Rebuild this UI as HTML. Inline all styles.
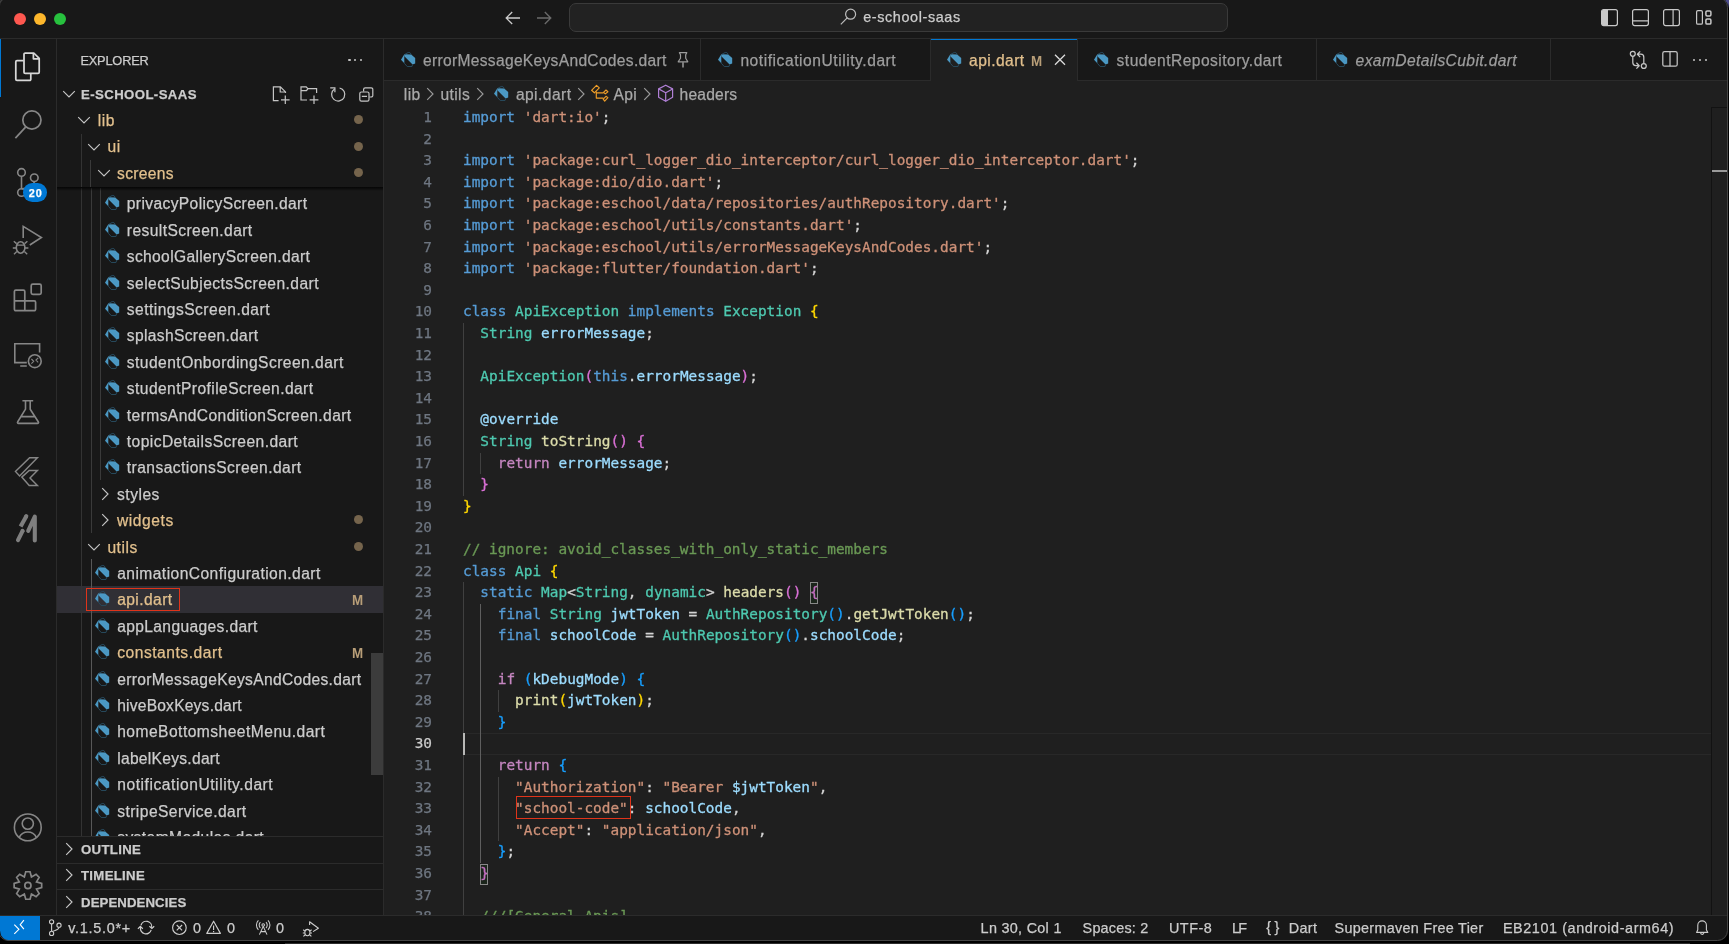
<!DOCTYPE html>
<html lang="en">
<head>
<meta charset="utf-8">
<title>api.dart — e-school-saas</title>
<style>
html,body{margin:0;padding:0;}
body{width:1729px;height:944px;overflow:hidden;background:#000;position:relative;font-family:'Liberation Sans',sans-serif;}
#wino{will-change:transform;position:absolute;left:0;top:-3px;width:1728px;height:944px;background:#181818;border-radius:10.5px;overflow:hidden;}
#win{position:absolute;left:0;top:3px;width:1728px;height:941px;}
#winb{position:absolute;left:-2px;top:-3px;width:1728px;height:942px;border:1px solid #444;border-radius:10.5px;pointer-events:none;z-index:50;}
.abs{position:absolute;}
.t{position:absolute;white-space:pre;-webkit-text-stroke:0.25px;}
.ln{position:absolute;left:384px;width:48px;text-align:right;font:14.4px/21.6px 'DejaVu Sans Mono','Liberation Mono',monospace;color:#6e7681;white-space:pre;-webkit-text-stroke:0.25px;}
.cl{position:absolute;left:463px;font:14.4px/21.6px 'DejaVu Sans Mono','Liberation Mono',monospace;color:#d4d4d4;white-space:pre;letter-spacing:0.009px;-webkit-text-stroke:0.3px;}
.k{color:#569cd6}.s{color:#ce9178}.c{color:#4ec9b0}.v{color:#9cdcfe}.f{color:#dcdcaa}.m{color:#6a9955}.r{color:#c586c0}
.b1{color:#ffd700}.b2{color:#da70d6}.b3{color:#179fff}
.hl{position:absolute;background:#2b2b2b;}
.vl{position:absolute;width:1px;background:#2b2b2b;}
.ig{position:absolute;width:1px;background:#404040;}
svg{position:absolute;overflow:visible;}
</style>
</head>
<body>
<div class="abs" style="left:1722px;top:0;width:7px;height:9px;background:linear-gradient(200deg,#4c4c8c 30%,#000 75%)"></div>
<div class="abs" style="left:285px;top:943px;width:1405px;height:1px;background:#2c2c2c"></div>
<div class="abs" style="left:0;top:0;width:6px;height:8px;background:#2b2b2b"></div>
<div id="wino"><div id="win">
<div class="abs" style="left:0px;top:0px;width:1728px;height:38px;background:#181818;"></div>
<div class="abs" style="left:0px;top:38px;width:1728px;height:1px;background:#2b2b2b;"></div>
<div class="abs" style="left:0px;top:39px;width:56px;height:876px;background:#181818;"></div>
<div class="abs" style="left:56px;top:39px;width:1px;height:876px;background:#2b2b2b;"></div>
<div class="abs" style="left:57px;top:39px;width:326px;height:876px;background:#181818;"></div>
<div class="abs" style="left:383px;top:39px;width:1px;height:876px;background:#2b2b2b;"></div>
<div class="abs" style="left:384px;top:39px;width:1344px;height:42px;background:#181818;"></div>
<div class="abs" style="left:384px;top:80px;width:1344px;height:1px;background:#2b2b2b;"></div>
<div class="abs" style="left:384px;top:81px;width:1344px;height:834px;background:#1f1f1f;"></div>
<div class="abs" style="left:0px;top:915px;width:1728px;height:1px;background:#2b2b2b;"></div>
<div class="abs" style="left:0px;top:916px;width:1728px;height:25px;background:#181818;"></div>
<div class="abs" style="left:13.8px;top:12.8px;width:12.4px;height:12.4px;border-radius:50%;background:#fe5850"></div>
<div class="abs" style="left:33.8px;top:12.8px;width:12.4px;height:12.4px;border-radius:50%;background:#fdb72c"></div>
<div class="abs" style="left:53.8px;top:12.8px;width:12.4px;height:12.4px;border-radius:50%;background:#27c13e"></div>
<svg style="left:504px;top:9px;" width="18" height="18" viewBox="0 0 18 18"><path d="M16 9H2.2M8.2 3L2.2 9l6 6" fill="none" stroke="#ccc" stroke-width="1.3"/></svg>
<svg style="left:535px;top:9px;" width="18" height="18" viewBox="0 0 18 18"><path d="M2 9h13.8M9.8 3l6 6-6 6" fill="none" stroke="#6b6b6b" stroke-width="1.3"/></svg>
<div class="abs" style="left:569px;top:3px;width:657px;height:27px;border:1px solid #3a3a3a;border-radius:7px;background:#222222"></div>
<svg style="left:840px;top:8px;" width="17" height="17" viewBox="0 0 17 17"><circle cx="10.6" cy="6.2" r="5" fill="none" stroke="#bdbdbd" stroke-width="1.2"/><path d="M7.2 9.8L0.8 16.4" stroke="#bdbdbd" stroke-width="1.2"/></svg>
<span class="t" style="left:863.2px;top:9.0px;font-size:14.4px;line-height:16px;color:#ccc;letter-spacing:0.617px;">e-school-saas</span>
<svg style="left:1601.1px;top:8.9px;" width="17" height="17.2" viewBox="0 0 17 17.2"><rect x="0.6" y="0.6" width="15.8" height="16" rx="2" fill="none" stroke="#c8c8c8" stroke-width="1.2"/><path d="M2.4 0.8H7V16.4H2.4A1.6 1.6 0 0 1 0.8 14.8V2.4A1.6 1.6 0 0 1 2.4 0.8z" fill="#c8c8c8"/></svg>
<svg style="left:1632px;top:8.9px;" width="17" height="17.2" viewBox="0 0 17 17.2"><rect x="0.6" y="0.6" width="15.8" height="16" rx="2" fill="none" stroke="#c8c8c8" stroke-width="1.2"/><path d="M0.6 11.9h15.8" stroke="#c8c8c8" stroke-width="1.2"/></svg>
<svg style="left:1663.2px;top:8.9px;" width="17" height="17.2" viewBox="0 0 17 17.2"><rect x="0.6" y="0.6" width="15.8" height="16" rx="2" fill="none" stroke="#c8c8c8" stroke-width="1.2"/><path d="M10.1 0.6v16" stroke="#c8c8c8" stroke-width="1.2"/></svg>
<svg style="left:1696px;top:10px;" width="16" height="15" viewBox="0 0 16 15"><rect x="0.6" y="0.6" width="5.8" height="13.6" rx="1.3" fill="none" stroke="#c8c8c8" stroke-width="1.2"/><rect x="9.9" y="0.9" width="5" height="5" rx="1.2" fill="none" stroke="#c8c8c8" stroke-width="1.5"/><rect x="9.9" y="9.1" width="5" height="5" rx="1.2" fill="none" stroke="#c8c8c8" stroke-width="1.5"/></svg>
<div class="abs" style="left:0px;top:39px;width:1.4px;height:58px;background:#0078d4;"></div>
<svg style="left:0;top:0" width="57" height="915" viewBox="0 0 57 915"><g fill="none" stroke="#d7d7d7" stroke-width="1.75" stroke-linejoin="round"><path d="M25.2 53h8.6l5.4 5.4v13.8a1.2 1.2 0 0 1-1.2 1.2H25.2a1.2 1.2 0 0 1-1.2-1.2V54.2a1.2 1.2 0 0 1 1.2-1.2z"/><path d="M33.4 53.2v5.6h5.6"/><path d="M23.6 60.6h-6.6a1.2 1.2 0 0 0-1.2 1.2v17.4a1.2 1.2 0 0 0 1.2 1.2h12.6a1.2 1.2 0 0 0 1.2-1.2v-5.4"/></g><g fill="none" stroke="#868686" stroke-width="1.7"><circle cx="31.9" cy="120" r="9.1"/><path d="M25.6 127.2L15.4 138.2"/></g><g fill="none" stroke="#868686" stroke-width="1.6"><circle cx="21.5" cy="172.4" r="3.8"/><circle cx="34.3" cy="177.8" r="3.8"/><circle cx="21.5" cy="192.5" r="3.8"/><path d="M21.5 176.2v12.5M34.3 181.6c0 5-6 6-12.8 7.4"/></g><g fill="none" stroke="#868686" stroke-width="1.6" stroke-linejoin="miter"><path d="M23.2 238V226.4L41.4 237.5 29.8 245"/><ellipse cx="20.6" cy="247.5" rx="4.3" ry="5.8"/><path d="M16.4 245.2H24.8" stroke-width="1.3"/><path d="M16.6 243.6l-2.8-2.4M24.6 243.6l2.8-2.4M16.2 248h-3.4M25 248h3.4M16.8 251.6l-2.8 2.6M24.4 251.6l2.8 2.6" stroke-width="1.4"/></g><g fill="none" stroke="#868686" stroke-width="1.7" stroke-linejoin="round"><path d="M15.8 290.1H23.4A1.4 1.4 0 0 1 24.8 291.5V300.9H34.2A1.4 1.4 0 0 1 35.6 302.3V309.3A1.4 1.4 0 0 1 34.2 310.7H15.8A1.4 1.4 0 0 1 14.4 309.3V291.5A1.4 1.4 0 0 1 15.8 290.1zM14.4 300.9H24.8V310.7"/><rect x="31.2" y="284.2" width="10" height="10.2" rx="1.6"/></g></svg>
<div class="abs" style="left:23.2px;top:183px;width:23.8px;height:18.6px;border-radius:9.3px;background:#0078d4;"></div>
<span class="t" style="left:28.8px;top:187.0px;font-size:10.8px;line-height:12px;color:#fff;letter-spacing:0.984px;font-weight:bold;">20</span>
<svg style="left:0;top:0" width="57" height="915" viewBox="0 0 57 915"><g fill="none" stroke="#868686" stroke-width="1.6"><path d="M39.6 352.6V343.8H14.8V362.6H26.8M20.2 366H26.8"/><circle cx="34.8" cy="361.2" r="6.4"/><path d="M31.4 359l2.3 2.3-2.3 2.3M38.2 357.8l-2.3 2.3 2.3 2.3" stroke-width="1.1"/></g><g fill="none" stroke="#868686" stroke-width="1.6" stroke-linejoin="round"><path d="M22.4 400.8H33.2M25.5 400.8V409.2L17.6 422a0.9 0.9 0 0 0 .8 1.4H37.6a0.9 0.9 0 0 0 .8-1.4L30.2 409.2V400.8M21.2 416.6H34.6"/></g><g fill="none" stroke="#868686" stroke-width="1.45" stroke-linejoin="miter"><path d="M15.4 471.4L29.6 457.7H37.4L19.6 476z"/><path d="M21.8 477.1L29.2 470.5H37.4L30 477.9L37.4 485.4H29.2z"/></g><g fill="none" stroke="#7e7e7e" stroke-width="4.1" stroke-linecap="round"><path d="M26.3 516.2L20.6 526.6" stroke-linecap="butt"/><path d="M26.1 516.4L26.3 516.1"/><path d="M22.6 530.8L18 540.2"/><path d="M22.9 530.2L22.4 531.2" stroke-linecap="butt"/><path d="M28.2 530.8L34.8 516.6V540.4" stroke-linejoin="round"/></g><g fill="none" stroke="#868686" stroke-width="1.6"><circle cx="27.8" cy="827.4" r="13.4"/><circle cx="27.8" cy="823.6" r="5.6"/><path d="M19.2 837.4a9.6 9.6 0 0 1 17.2 0"/></g></svg>
<svg style="left:0;top:0" width="57" height="915" viewBox="0 0 57 915"><g fill="none" stroke="#868686" stroke-width="1.7" stroke-linejoin="miter"><path d="M24.34 876.91 L25.75 871.75 L30.05 871.75 L31.46 876.91 L36.10 874.26 L39.14 877.30 L36.49 881.94 L41.65 883.35 L41.65 887.65 L36.49 889.06 L39.14 893.70 L36.10 896.74 L31.46 894.09 L30.05 899.25 L25.75 899.25 L24.34 894.09 L19.70 896.74 L16.66 893.70 L19.31 889.06 L14.15 887.65 L14.15 883.35 L19.31 881.94 L16.66 877.30 L19.70 874.26z"/><circle cx="27.9" cy="885.5" r="3.1"/></g></svg>
<span class="t" style="left:80.4px;top:53.0px;font-size:12.8px;line-height:15px;color:#cccccc;letter-spacing:-0.186px;">EXPLORER</span>
<div class="abs" style="left:348.4px;top:58.6px;width:2.2px;height:2.2px;border-radius:50%;background:#c5c5c5"></div>
<div class="abs" style="left:354.1px;top:58.6px;width:2.2px;height:2.2px;border-radius:50%;background:#c5c5c5"></div>
<div class="abs" style="left:359.8px;top:58.6px;width:2.2px;height:2.2px;border-radius:50%;background:#c5c5c5"></div>
<div class="abs" style="left:57px;top:586px;width:326px;height:26.6px;background:#302f35;"></div>
<div class="abs" style="left:57px;top:187px;width:326px;height:649.4px;overflow:hidden"><div class="abs" style="left:-57px;top:-187px;width:400px;height:900px">
<svg style="left:105.0px;top:195.4px;" width="14.2" height="15" viewBox="0 0 14.2 15"><polygon points="0,7.85 3.3,2.3 3.3,11.2" fill="#4b98c3"/><polygon points="3.3,2.3 10.2,2.6 14.2,5.9 14.2,11.4 11.6,12.6 3.3,4.3" fill="#4b98c3"/><polyline points="3.3,11.2 6.2,14.5 11.0,14.5 11.6,12.5" fill="none" stroke="#27495c" stroke-width="1"/><polyline points="4.0,2.2 7.2,0.5 8.9,0.6 10.4,2.6" fill="none" stroke="#27495c" stroke-width="1"/></svg>
<span class="t" style="left:126.8px;top:195.0px;font-size:15.6px;line-height:17px;color:#cccccc;letter-spacing:0.374px;">privacyPolicyScreen.dart</span>
<svg style="left:105.0px;top:221.8px;" width="14.2" height="15" viewBox="0 0 14.2 15"><polygon points="0,7.85 3.3,2.3 3.3,11.2" fill="#4b98c3"/><polygon points="3.3,2.3 10.2,2.6 14.2,5.9 14.2,11.4 11.6,12.6 3.3,4.3" fill="#4b98c3"/><polyline points="3.3,11.2 6.2,14.5 11.0,14.5 11.6,12.5" fill="none" stroke="#27495c" stroke-width="1"/><polyline points="4.0,2.2 7.2,0.5 8.9,0.6 10.4,2.6" fill="none" stroke="#27495c" stroke-width="1"/></svg>
<span class="t" style="left:126.8px;top:222.0px;font-size:15.6px;line-height:17px;color:#cccccc;letter-spacing:0.416px;">resultScreen.dart</span>
<svg style="left:105.0px;top:248.20000000000002px;" width="14.2" height="15" viewBox="0 0 14.2 15"><polygon points="0,7.85 3.3,2.3 3.3,11.2" fill="#4b98c3"/><polygon points="3.3,2.3 10.2,2.6 14.2,5.9 14.2,11.4 11.6,12.6 3.3,4.3" fill="#4b98c3"/><polyline points="3.3,11.2 6.2,14.5 11.0,14.5 11.6,12.5" fill="none" stroke="#27495c" stroke-width="1"/><polyline points="4.0,2.2 7.2,0.5 8.9,0.6 10.4,2.6" fill="none" stroke="#27495c" stroke-width="1"/></svg>
<span class="t" style="left:126.8px;top:248.0px;font-size:15.6px;line-height:17px;color:#cccccc;letter-spacing:0.344px;">schoolGalleryScreen.dart</span>
<svg style="left:105.0px;top:274.6px;" width="14.2" height="15" viewBox="0 0 14.2 15"><polygon points="0,7.85 3.3,2.3 3.3,11.2" fill="#4b98c3"/><polygon points="3.3,2.3 10.2,2.6 14.2,5.9 14.2,11.4 11.6,12.6 3.3,4.3" fill="#4b98c3"/><polyline points="3.3,11.2 6.2,14.5 11.0,14.5 11.6,12.5" fill="none" stroke="#27495c" stroke-width="1"/><polyline points="4.0,2.2 7.2,0.5 8.9,0.6 10.4,2.6" fill="none" stroke="#27495c" stroke-width="1"/></svg>
<span class="t" style="left:126.8px;top:275.0px;font-size:15.6px;line-height:17px;color:#cccccc;letter-spacing:0.439px;">selectSubjectsScreen.dart</span>
<svg style="left:105.0px;top:301.0px;" width="14.2" height="15" viewBox="0 0 14.2 15"><polygon points="0,7.85 3.3,2.3 3.3,11.2" fill="#4b98c3"/><polygon points="3.3,2.3 10.2,2.6 14.2,5.9 14.2,11.4 11.6,12.6 3.3,4.3" fill="#4b98c3"/><polyline points="3.3,11.2 6.2,14.5 11.0,14.5 11.6,12.5" fill="none" stroke="#27495c" stroke-width="1"/><polyline points="4.0,2.2 7.2,0.5 8.9,0.6 10.4,2.6" fill="none" stroke="#27495c" stroke-width="1"/></svg>
<span class="t" style="left:126.8px;top:301.0px;font-size:15.6px;line-height:17px;color:#cccccc;letter-spacing:0.463px;">settingsScreen.dart</span>
<svg style="left:105.0px;top:327.40000000000003px;" width="14.2" height="15" viewBox="0 0 14.2 15"><polygon points="0,7.85 3.3,2.3 3.3,11.2" fill="#4b98c3"/><polygon points="3.3,2.3 10.2,2.6 14.2,5.9 14.2,11.4 11.6,12.6 3.3,4.3" fill="#4b98c3"/><polyline points="3.3,11.2 6.2,14.5 11.0,14.5 11.6,12.5" fill="none" stroke="#27495c" stroke-width="1"/><polyline points="4.0,2.2 7.2,0.5 8.9,0.6 10.4,2.6" fill="none" stroke="#27495c" stroke-width="1"/></svg>
<span class="t" style="left:126.8px;top:327.0px;font-size:15.6px;line-height:17px;color:#cccccc;letter-spacing:0.345px;">splashScreen.dart</span>
<svg style="left:105.0px;top:353.8px;" width="14.2" height="15" viewBox="0 0 14.2 15"><polygon points="0,7.85 3.3,2.3 3.3,11.2" fill="#4b98c3"/><polygon points="3.3,2.3 10.2,2.6 14.2,5.9 14.2,11.4 11.6,12.6 3.3,4.3" fill="#4b98c3"/><polyline points="3.3,11.2 6.2,14.5 11.0,14.5 11.6,12.5" fill="none" stroke="#27495c" stroke-width="1"/><polyline points="4.0,2.2 7.2,0.5 8.9,0.6 10.4,2.6" fill="none" stroke="#27495c" stroke-width="1"/></svg>
<span class="t" style="left:126.8px;top:354.0px;font-size:15.6px;line-height:17px;color:#cccccc;letter-spacing:0.458px;">studentOnbordingScreen.dart</span>
<svg style="left:105.0px;top:380.20000000000005px;" width="14.2" height="15" viewBox="0 0 14.2 15"><polygon points="0,7.85 3.3,2.3 3.3,11.2" fill="#4b98c3"/><polygon points="3.3,2.3 10.2,2.6 14.2,5.9 14.2,11.4 11.6,12.6 3.3,4.3" fill="#4b98c3"/><polyline points="3.3,11.2 6.2,14.5 11.0,14.5 11.6,12.5" fill="none" stroke="#27495c" stroke-width="1"/><polyline points="4.0,2.2 7.2,0.5 8.9,0.6 10.4,2.6" fill="none" stroke="#27495c" stroke-width="1"/></svg>
<span class="t" style="left:126.8px;top:380.0px;font-size:15.6px;line-height:17px;color:#cccccc;letter-spacing:0.430px;">studentProfileScreen.dart</span>
<svg style="left:105.0px;top:406.6px;" width="14.2" height="15" viewBox="0 0 14.2 15"><polygon points="0,7.85 3.3,2.3 3.3,11.2" fill="#4b98c3"/><polygon points="3.3,2.3 10.2,2.6 14.2,5.9 14.2,11.4 11.6,12.6 3.3,4.3" fill="#4b98c3"/><polyline points="3.3,11.2 6.2,14.5 11.0,14.5 11.6,12.5" fill="none" stroke="#27495c" stroke-width="1"/><polyline points="4.0,2.2 7.2,0.5 8.9,0.6 10.4,2.6" fill="none" stroke="#27495c" stroke-width="1"/></svg>
<span class="t" style="left:126.8px;top:407.0px;font-size:15.6px;line-height:17px;color:#cccccc;letter-spacing:0.414px;">termsAndConditionScreen.dart</span>
<svg style="left:105.0px;top:433.0px;" width="14.2" height="15" viewBox="0 0 14.2 15"><polygon points="0,7.85 3.3,2.3 3.3,11.2" fill="#4b98c3"/><polygon points="3.3,2.3 10.2,2.6 14.2,5.9 14.2,11.4 11.6,12.6 3.3,4.3" fill="#4b98c3"/><polyline points="3.3,11.2 6.2,14.5 11.0,14.5 11.6,12.5" fill="none" stroke="#27495c" stroke-width="1"/><polyline points="4.0,2.2 7.2,0.5 8.9,0.6 10.4,2.6" fill="none" stroke="#27495c" stroke-width="1"/></svg>
<span class="t" style="left:126.8px;top:433.0px;font-size:15.6px;line-height:17px;color:#cccccc;letter-spacing:0.436px;">topicDetailsScreen.dart</span>
<svg style="left:105.0px;top:459.40000000000003px;" width="14.2" height="15" viewBox="0 0 14.2 15"><polygon points="0,7.85 3.3,2.3 3.3,11.2" fill="#4b98c3"/><polygon points="3.3,2.3 10.2,2.6 14.2,5.9 14.2,11.4 11.6,12.6 3.3,4.3" fill="#4b98c3"/><polyline points="3.3,11.2 6.2,14.5 11.0,14.5 11.6,12.5" fill="none" stroke="#27495c" stroke-width="1"/><polyline points="4.0,2.2 7.2,0.5 8.9,0.6 10.4,2.6" fill="none" stroke="#27495c" stroke-width="1"/></svg>
<span class="t" style="left:126.8px;top:459.0px;font-size:15.6px;line-height:17px;color:#cccccc;letter-spacing:0.441px;">transactionsScreen.dart</span>
<svg style="left:96.9px;top:485.7px;" width="16" height="16" viewBox="0 0 16 16"><polyline points="5.2,2.2 11,8 5.2,13.8" fill="none" stroke="#c5c5c5" stroke-width="1.15"/></svg>
<span class="t" style="left:117.0px;top:486.0px;font-size:15.6px;line-height:17px;color:#cccccc;letter-spacing:0.505px;">styles</span>
<svg style="left:96.9px;top:512.1px;" width="16" height="16" viewBox="0 0 16 16"><polyline points="5.2,2.2 11,8 5.2,13.8" fill="none" stroke="#c5c5c5" stroke-width="1.15"/></svg>
<span class="t" style="left:117.0px;top:512.0px;font-size:15.6px;line-height:17px;color:#e2c08d;letter-spacing:0.571px;">widgets</span>
<div class="abs" style="left:353.7px;top:515.3px;width:9.2px;height:9.2px;border-radius:50%;background:#75644c"></div>
<svg style="left:85.89999999999999px;top:538.7px;" width="16" height="16" viewBox="0 0 16 16"><polyline points="2.2,5.2 8,11 13.8,5.2" fill="none" stroke="#c5c5c5" stroke-width="1.15"/></svg>
<span class="t" style="left:107.4px;top:539.0px;font-size:15.6px;line-height:17px;color:#e2c08d;letter-spacing:0.541px;">utils</span>
<div class="abs" style="left:353.7px;top:541.7px;width:9.2px;height:9.2px;border-radius:50%;background:#75644c"></div>
<svg style="left:95.4px;top:565.0px;" width="14.2" height="15" viewBox="0 0 14.2 15"><polygon points="0,7.85 3.3,2.3 3.3,11.2" fill="#4b98c3"/><polygon points="3.3,2.3 10.2,2.6 14.2,5.9 14.2,11.4 11.6,12.6 3.3,4.3" fill="#4b98c3"/><polyline points="3.3,11.2 6.2,14.5 11.0,14.5 11.6,12.5" fill="none" stroke="#27495c" stroke-width="1"/><polyline points="4.0,2.2 7.2,0.5 8.9,0.6 10.4,2.6" fill="none" stroke="#27495c" stroke-width="1"/></svg>
<span class="t" style="left:117.2px;top:565.0px;font-size:15.6px;line-height:17px;color:#cccccc;letter-spacing:0.443px;">animationConfiguration.dart</span>
<svg style="left:95.4px;top:591.4px;" width="14.2" height="15" viewBox="0 0 14.2 15"><polygon points="0,7.85 3.3,2.3 3.3,11.2" fill="#4b98c3"/><polygon points="3.3,2.3 10.2,2.6 14.2,5.9 14.2,11.4 11.6,12.6 3.3,4.3" fill="#4b98c3"/><polyline points="3.3,11.2 6.2,14.5 11.0,14.5 11.6,12.5" fill="none" stroke="#27495c" stroke-width="1"/><polyline points="4.0,2.2 7.2,0.5 8.9,0.6 10.4,2.6" fill="none" stroke="#27495c" stroke-width="1"/></svg>
<span class="t" style="left:117.2px;top:591.0px;font-size:15.6px;line-height:17px;color:#e2c08d;letter-spacing:0.412px;">api.dart</span>
<span class="t" style="left:351.9px;top:592.0px;font-size:14.4px;line-height:16px;color:#b89e78;letter-spacing:0.000px;font-weight:bold;-webkit-text-stroke:0;transform:scaleX(0.93);transform-origin:0 0;">M</span>
<svg style="left:95.4px;top:617.8000000000001px;" width="14.2" height="15" viewBox="0 0 14.2 15"><polygon points="0,7.85 3.3,2.3 3.3,11.2" fill="#4b98c3"/><polygon points="3.3,2.3 10.2,2.6 14.2,5.9 14.2,11.4 11.6,12.6 3.3,4.3" fill="#4b98c3"/><polyline points="3.3,11.2 6.2,14.5 11.0,14.5 11.6,12.5" fill="none" stroke="#27495c" stroke-width="1"/><polyline points="4.0,2.2 7.2,0.5 8.9,0.6 10.4,2.6" fill="none" stroke="#27495c" stroke-width="1"/></svg>
<span class="t" style="left:117.2px;top:618.0px;font-size:15.6px;line-height:17px;color:#cccccc;letter-spacing:0.362px;">appLanguages.dart</span>
<svg style="left:95.4px;top:644.1999999999999px;" width="14.2" height="15" viewBox="0 0 14.2 15"><polygon points="0,7.85 3.3,2.3 3.3,11.2" fill="#4b98c3"/><polygon points="3.3,2.3 10.2,2.6 14.2,5.9 14.2,11.4 11.6,12.6 3.3,4.3" fill="#4b98c3"/><polyline points="3.3,11.2 6.2,14.5 11.0,14.5 11.6,12.5" fill="none" stroke="#27495c" stroke-width="1"/><polyline points="4.0,2.2 7.2,0.5 8.9,0.6 10.4,2.6" fill="none" stroke="#27495c" stroke-width="1"/></svg>
<span class="t" style="left:117.2px;top:644.0px;font-size:15.6px;line-height:17px;color:#e2c08d;letter-spacing:0.527px;">constants.dart</span>
<span class="t" style="left:351.9px;top:645.0px;font-size:14.4px;line-height:16px;color:#b89e78;letter-spacing:0.000px;font-weight:bold;-webkit-text-stroke:0;transform:scaleX(0.93);transform-origin:0 0;">M</span>
<svg style="left:95.4px;top:670.6px;" width="14.2" height="15" viewBox="0 0 14.2 15"><polygon points="0,7.85 3.3,2.3 3.3,11.2" fill="#4b98c3"/><polygon points="3.3,2.3 10.2,2.6 14.2,5.9 14.2,11.4 11.6,12.6 3.3,4.3" fill="#4b98c3"/><polyline points="3.3,11.2 6.2,14.5 11.0,14.5 11.6,12.5" fill="none" stroke="#27495c" stroke-width="1"/><polyline points="4.0,2.2 7.2,0.5 8.9,0.6 10.4,2.6" fill="none" stroke="#27495c" stroke-width="1"/></svg>
<span class="t" style="left:117.2px;top:671.0px;font-size:15.6px;line-height:17px;color:#cccccc;letter-spacing:0.322px;">errorMessageKeysAndCodes.dart</span>
<svg style="left:95.4px;top:697.0px;" width="14.2" height="15" viewBox="0 0 14.2 15"><polygon points="0,7.85 3.3,2.3 3.3,11.2" fill="#4b98c3"/><polygon points="3.3,2.3 10.2,2.6 14.2,5.9 14.2,11.4 11.6,12.6 3.3,4.3" fill="#4b98c3"/><polyline points="3.3,11.2 6.2,14.5 11.0,14.5 11.6,12.5" fill="none" stroke="#27495c" stroke-width="1"/><polyline points="4.0,2.2 7.2,0.5 8.9,0.6 10.4,2.6" fill="none" stroke="#27495c" stroke-width="1"/></svg>
<span class="t" style="left:117.2px;top:697.0px;font-size:15.6px;line-height:17px;color:#cccccc;letter-spacing:0.209px;">hiveBoxKeys.dart</span>
<svg style="left:95.4px;top:723.4px;" width="14.2" height="15" viewBox="0 0 14.2 15"><polygon points="0,7.85 3.3,2.3 3.3,11.2" fill="#4b98c3"/><polygon points="3.3,2.3 10.2,2.6 14.2,5.9 14.2,11.4 11.6,12.6 3.3,4.3" fill="#4b98c3"/><polyline points="3.3,11.2 6.2,14.5 11.0,14.5 11.6,12.5" fill="none" stroke="#27495c" stroke-width="1"/><polyline points="4.0,2.2 7.2,0.5 8.9,0.6 10.4,2.6" fill="none" stroke="#27495c" stroke-width="1"/></svg>
<span class="t" style="left:117.2px;top:723.0px;font-size:15.6px;line-height:17px;color:#cccccc;letter-spacing:0.471px;">homeBottomsheetMenu.dart</span>
<svg style="left:95.4px;top:749.8000000000001px;" width="14.2" height="15" viewBox="0 0 14.2 15"><polygon points="0,7.85 3.3,2.3 3.3,11.2" fill="#4b98c3"/><polygon points="3.3,2.3 10.2,2.6 14.2,5.9 14.2,11.4 11.6,12.6 3.3,4.3" fill="#4b98c3"/><polyline points="3.3,11.2 6.2,14.5 11.0,14.5 11.6,12.5" fill="none" stroke="#27495c" stroke-width="1"/><polyline points="4.0,2.2 7.2,0.5 8.9,0.6 10.4,2.6" fill="none" stroke="#27495c" stroke-width="1"/></svg>
<span class="t" style="left:117.2px;top:750.0px;font-size:15.6px;line-height:17px;color:#cccccc;letter-spacing:0.282px;">labelKeys.dart</span>
<svg style="left:95.4px;top:776.1999999999999px;" width="14.2" height="15" viewBox="0 0 14.2 15"><polygon points="0,7.85 3.3,2.3 3.3,11.2" fill="#4b98c3"/><polygon points="3.3,2.3 10.2,2.6 14.2,5.9 14.2,11.4 11.6,12.6 3.3,4.3" fill="#4b98c3"/><polyline points="3.3,11.2 6.2,14.5 11.0,14.5 11.6,12.5" fill="none" stroke="#27495c" stroke-width="1"/><polyline points="4.0,2.2 7.2,0.5 8.9,0.6 10.4,2.6" fill="none" stroke="#27495c" stroke-width="1"/></svg>
<span class="t" style="left:117.2px;top:776.0px;font-size:15.6px;line-height:17px;color:#cccccc;letter-spacing:0.556px;">notificationUtility.dart</span>
<svg style="left:95.4px;top:802.6px;" width="14.2" height="15" viewBox="0 0 14.2 15"><polygon points="0,7.85 3.3,2.3 3.3,11.2" fill="#4b98c3"/><polygon points="3.3,2.3 10.2,2.6 14.2,5.9 14.2,11.4 11.6,12.6 3.3,4.3" fill="#4b98c3"/><polyline points="3.3,11.2 6.2,14.5 11.0,14.5 11.6,12.5" fill="none" stroke="#27495c" stroke-width="1"/><polyline points="4.0,2.2 7.2,0.5 8.9,0.6 10.4,2.6" fill="none" stroke="#27495c" stroke-width="1"/></svg>
<span class="t" style="left:117.2px;top:803.0px;font-size:15.6px;line-height:17px;color:#cccccc;letter-spacing:0.450px;">stripeService.dart</span>
<svg style="left:95.4px;top:828.9999999999999px;" width="14.2" height="15" viewBox="0 0 14.2 15"><polygon points="0,7.85 3.3,2.3 3.3,11.2" fill="#4b98c3"/><polygon points="3.3,2.3 10.2,2.6 14.2,5.9 14.2,11.4 11.6,12.6 3.3,4.3" fill="#4b98c3"/><polyline points="3.3,11.2 6.2,14.5 11.0,14.5 11.6,12.5" fill="none" stroke="#27495c" stroke-width="1"/><polyline points="4.0,2.2 7.2,0.5 8.9,0.6 10.4,2.6" fill="none" stroke="#27495c" stroke-width="1"/></svg>
<span class="t" style="left:117.2px;top:829.0px;font-size:15.6px;line-height:17px;color:#cccccc;letter-spacing:0.410px;">systemModules.dart</span>
<div class="ig" style="left:81px;top:187px;height:660px;background:#333"></div>
<div class="ig" style="left:91px;top:187px;height:346.0px;background:#3a3a3a"></div>
<div class="ig" style="left:100px;top:187px;height:293.2px;background:#3a3a3a"></div>
<div class="ig" style="left:91px;top:559.4px;height:300px;background:#585858"></div>
</div></div>
<div class="abs" style="left:86.3px;top:588.3px;width:92.2px;height:21px;border:1.2px solid #e0341a"></div>
<div class="abs" style="left:57px;top:107px;width:326px;height:80.6px;background:#181818;"></div>
<svg style="left:76.3px;top:112.15px;" width="16" height="16" viewBox="0 0 16 16"><polyline points="2.2,5.2 8,11 13.8,5.2" fill="none" stroke="#c5c5c5" stroke-width="1.15"/></svg>
<span class="t" style="left:97.8px;top:112.0px;font-size:15.6px;line-height:17px;color:#e2c08d;letter-spacing:0.495px;">lib</span>
<div class="abs" style="left:353.7px;top:115.2px;width:9.2px;height:9.2px;border-radius:50%;background:#75644c"></div>
<svg style="left:85.89999999999999px;top:138.54999999999998px;" width="16" height="16" viewBox="0 0 16 16"><polyline points="2.2,5.2 8,11 13.8,5.2" fill="none" stroke="#c5c5c5" stroke-width="1.15"/></svg>
<span class="t" style="left:107.4px;top:138.0px;font-size:15.6px;line-height:17px;color:#e2c08d;letter-spacing:0.659px;">ui</span>
<div class="abs" style="left:353.7px;top:141.5px;width:9.2px;height:9.2px;border-radius:50%;background:#75644c"></div>
<svg style="left:95.5px;top:164.95px;" width="16" height="16" viewBox="0 0 16 16"><polyline points="2.2,5.2 8,11 13.8,5.2" fill="none" stroke="#c5c5c5" stroke-width="1.15"/></svg>
<span class="t" style="left:117.0px;top:165.0px;font-size:15.6px;line-height:17px;color:#e2c08d;letter-spacing:0.332px;">screens</span>
<div class="abs" style="left:353.7px;top:167.9px;width:9.2px;height:9.2px;border-radius:50%;background:#75644c"></div>
<div class="ig" style="left:81px;top:133.6px;height:53.4px;background:#333"></div>
<div class="ig" style="left:90px;top:160px;height:27px;background:#3a3a3a"></div>
<div class="abs" style="left:57px;top:186.6px;width:326px;height:4px;background:linear-gradient(#000000cc,#00000000)"></div>
<svg style="left:60.7px;top:86.4px;" width="16" height="16" viewBox="0 0 16 16"><polyline points="2.2,5.2 8,11 13.8,5.2" fill="none" stroke="#c5c5c5" stroke-width="1.15"/></svg>
<span class="t" style="left:81.0px;top:87.0px;font-size:13.2px;line-height:15px;color:#cccccc;letter-spacing:0.405px;font-weight:bold;">E-SCHOOL-SAAS</span>
<svg style="left:0;top:0" width="384" height="110" viewBox="0 0 384 110"><g fill="none" stroke="#c5c5c5" stroke-width="1.2"><path d="M278.6 100.6H273.4V86.8H280.4L285.5 91.9V93M280.2 87V92H285.3"/><path d="M285.3 95.4V104M281 99.8H289.6"/><path d="M307 100H301V86.8H306.2L307.8 88.6H316.6V93M301 90.6H306.4L307.8 89"/><path d="M314 95.4V104M309.6 99.8H318.4"/><path d="M334.5 89A6.6 6.6 0 1 0 339.6 88"/><path d="M330.2 87.8H334.9V92.2"/><rect x="359.8" y="92" width="9.2" height="9.2" rx="1.6"/><path d="M363.6 91.6V89.4A1.6 1.6 0 0 1 365.2 87.8H371.2A1.6 1.6 0 0 1 372.8 89.4V95.4A1.6 1.6 0 0 1 371.2 97H369.4M361.8 96.4H367"/></g></svg>
<div class="abs" style="left:371px;top:653px;width:12px;height:122px;background:#3c3c3c;"></div>
<div class="abs" style="left:57px;top:836px;width:326px;height:1px;background:#2b2b2b;"></div>
<svg style="left:60.599999999999994px;top:840.9px;" width="16" height="16" viewBox="0 0 16 16"><polyline points="5.2,2.2 11,8 5.2,13.8" fill="none" stroke="#c5c5c5" stroke-width="1.15"/></svg>
<span class="t" style="left:81.0px;top:842.0px;font-size:13.2px;line-height:15px;color:#cccccc;letter-spacing:0.318px;font-weight:bold;">OUTLINE</span>
<div class="abs" style="left:57px;top:863px;width:326px;height:1px;background:#2b2b2b;"></div>
<svg style="left:60.599999999999994px;top:867.3px;" width="16" height="16" viewBox="0 0 16 16"><polyline points="5.2,2.2 11,8 5.2,13.8" fill="none" stroke="#c5c5c5" stroke-width="1.15"/></svg>
<span class="t" style="left:81.0px;top:868.0px;font-size:13.2px;line-height:15px;color:#cccccc;letter-spacing:0.308px;font-weight:bold;">TIMELINE</span>
<div class="abs" style="left:57px;top:889px;width:326px;height:1px;background:#2b2b2b;"></div>
<svg style="left:60.599999999999994px;top:893.7px;" width="16" height="16" viewBox="0 0 16 16"><polyline points="5.2,2.2 11,8 5.2,13.8" fill="none" stroke="#c5c5c5" stroke-width="1.15"/></svg>
<span class="t" style="left:81.0px;top:895.0px;font-size:13.2px;line-height:15px;color:#cccccc;letter-spacing:0.103px;font-weight:bold;">DEPENDENCIES</span>
<div class="abs" style="left:700px;top:39px;width:1px;height:41px;background:#2b2b2b;"></div>
<div class="abs" style="left:930px;top:39px;width:1px;height:41px;background:#2b2b2b;"></div>
<div class="abs" style="left:1316px;top:39px;width:1px;height:41px;background:#2b2b2b;"></div>
<div class="abs" style="left:1550px;top:39px;width:1px;height:41px;background:#2b2b2b;"></div>
<div class="abs" style="left:931px;top:39px;width:146px;height:42px;background:#1f1f1f;"></div>
<div class="abs" style="left:1077px;top:39px;width:1px;height:41px;background:#2b2b2b;"></div>
<div class="abs" style="left:931px;top:39px;width:146px;height:1px;background:#0078d4;"></div>
<svg style="left:400.9px;top:51.9px;" width="14.2" height="15" viewBox="0 0 14.2 15"><polygon points="0,7.85 3.3,2.3 3.3,11.2" fill="#4b98c3"/><polygon points="3.3,2.3 10.2,2.6 14.2,5.9 14.2,11.4 11.6,12.6 3.3,4.3" fill="#4b98c3"/><polyline points="3.3,11.2 6.2,14.5 11.0,14.5 11.6,12.5" fill="none" stroke="#27495c" stroke-width="1"/><polyline points="4.0,2.2 7.2,0.5 8.9,0.6 10.4,2.6" fill="none" stroke="#27495c" stroke-width="1"/></svg>
<span class="t" style="left:423.1px;top:52.0px;font-size:15.6px;line-height:17px;color:#9d9d9d;letter-spacing:0.297px;">errorMessageKeysAndCodes.dart</span>
<svg style="left:718.4px;top:51.9px;" width="14.2" height="15" viewBox="0 0 14.2 15"><polygon points="0,7.85 3.3,2.3 3.3,11.2" fill="#4b98c3"/><polygon points="3.3,2.3 10.2,2.6 14.2,5.9 14.2,11.4 11.6,12.6 3.3,4.3" fill="#4b98c3"/><polyline points="3.3,11.2 6.2,14.5 11.0,14.5 11.6,12.5" fill="none" stroke="#27495c" stroke-width="1"/><polyline points="4.0,2.2 7.2,0.5 8.9,0.6 10.4,2.6" fill="none" stroke="#27495c" stroke-width="1"/></svg>
<span class="t" style="left:740.4px;top:52.0px;font-size:15.6px;line-height:17px;color:#9d9d9d;letter-spacing:0.547px;">notificationUtility.dart</span>
<svg style="left:947.0px;top:51.9px;" width="14.2" height="15" viewBox="0 0 14.2 15"><polygon points="0,7.85 3.3,2.3 3.3,11.2" fill="#4b98c3"/><polygon points="3.3,2.3 10.2,2.6 14.2,5.9 14.2,11.4 11.6,12.6 3.3,4.3" fill="#4b98c3"/><polyline points="3.3,11.2 6.2,14.5 11.0,14.5 11.6,12.5" fill="none" stroke="#27495c" stroke-width="1"/><polyline points="4.0,2.2 7.2,0.5 8.9,0.6 10.4,2.6" fill="none" stroke="#27495c" stroke-width="1"/></svg>
<span class="t" style="left:969.1px;top:52.0px;font-size:15.6px;line-height:17px;color:#e2c08d;letter-spacing:0.426px;">api.dart</span>
<span class="t" style="left:1030.9px;top:53.0px;font-size:14.4px;line-height:16px;color:#b89e78;letter-spacing:0.000px;font-weight:bold;-webkit-text-stroke:0;transform:scaleX(0.93);transform-origin:0 0;">M</span>
<svg style="left:1094.1000000000001px;top:51.9px;" width="14.2" height="15" viewBox="0 0 14.2 15"><polygon points="0,7.85 3.3,2.3 3.3,11.2" fill="#4b98c3"/><polygon points="3.3,2.3 10.2,2.6 14.2,5.9 14.2,11.4 11.6,12.6 3.3,4.3" fill="#4b98c3"/><polyline points="3.3,11.2 6.2,14.5 11.0,14.5 11.6,12.5" fill="none" stroke="#27495c" stroke-width="1"/><polyline points="4.0,2.2 7.2,0.5 8.9,0.6 10.4,2.6" fill="none" stroke="#27495c" stroke-width="1"/></svg>
<span class="t" style="left:1116.6px;top:52.0px;font-size:15.6px;line-height:17px;color:#9d9d9d;letter-spacing:0.456px;">studentRepository.dart</span>
<svg style="left:1333.4px;top:51.9px;" width="14.2" height="15" viewBox="0 0 14.2 15"><polygon points="0,7.85 3.3,2.3 3.3,11.2" fill="#4b98c3"/><polygon points="3.3,2.3 10.2,2.6 14.2,5.9 14.2,11.4 11.6,12.6 3.3,4.3" fill="#4b98c3"/><polyline points="3.3,11.2 6.2,14.5 11.0,14.5 11.6,12.5" fill="none" stroke="#27495c" stroke-width="1"/><polyline points="4.0,2.2 7.2,0.5 8.9,0.6 10.4,2.6" fill="none" stroke="#27495c" stroke-width="1"/></svg>
<span class="t" style="left:1355.6px;top:52.0px;font-size:15.6px;line-height:17px;color:#9d9d9d;letter-spacing:0.385px;font-style:italic;">examDetailsCubit.dart</span>
<svg style="left:0;top:0" width="700" height="81" viewBox="0 0 700 81"><g fill="none" stroke="#9d9d9d" stroke-width="1.2" stroke-linejoin="round"><path d="M679.4 52.7H686.8L685.7 54.8V58.2L687.8 61.8H678.2L680.5 58.2V54.8z"/><path d="M683 62.2V67.4" stroke-width="1.5"/></g></svg>
<svg style="left:1054px;top:53.6px;" width="12" height="12" viewBox="0 0 12 12"><path d="M1 0.8L11 10.8M11 0.8L1 10.8" stroke="#dcdcdc" stroke-width="1.25" fill="none"/></svg>
<svg style="left:0;top:0" width="1728" height="81" viewBox="0 0 1728 81"><g fill="none" stroke="#c5c5c5" stroke-width="1.25" stroke-linejoin="round"><circle cx="1632.8" cy="53.8" r="2.45"/><circle cx="1643.8" cy="66" r="2.45"/><path d="M1632.8 56.4V62.6A3 3 0 0 0 1635.8 65.6H1638.6M1636.4 62.8L1639.2 65.7 1636.4 68.6"/><path d="M1643.8 63.4V57.2A3 3 0 0 0 1640.8 54.2H1638M1640.2 51.4L1637.4 54.2 1640.2 57.1"/><rect x="1662.8" y="51.5" width="14.4" height="14.7" rx="1.8"/><path d="M1670 51.5V66.2"/></g></svg>
<div class="abs" style="left:1693.3px;top:58.5px;width:2.1px;height:2.1px;border-radius:50%;background:#c5c5c5"></div>
<div class="abs" style="left:1699.3px;top:58.5px;width:2.1px;height:2.1px;border-radius:50%;background:#c5c5c5"></div>
<div class="abs" style="left:1705.4px;top:58.5px;width:2.1px;height:2.1px;border-radius:50%;background:#c5c5c5"></div>
<span class="t" style="left:403.8px;top:86.0px;font-size:15.6px;line-height:17px;color:#a9a9a9;letter-spacing:0.395px;">lib</span>
<svg style="left:422.2px;top:85.5px;" width="16" height="16" viewBox="0 0 16 16"><polyline points="5.2,2.2 11,8 5.2,13.8" fill="none" stroke="#9a9a9a" stroke-width="1.15"/></svg>
<span class="t" style="left:440.4px;top:86.0px;font-size:15.6px;line-height:17px;color:#a9a9a9;letter-spacing:0.391px;">utils</span>
<svg style="left:471.8px;top:85.5px;" width="16" height="16" viewBox="0 0 16 16"><polyline points="5.2,2.2 11,8 5.2,13.8" fill="none" stroke="#9a9a9a" stroke-width="1.15"/></svg>
<svg style="left:494.0px;top:85.9px;" width="14.2" height="15" viewBox="0 0 14.2 15"><polygon points="0,7.85 3.3,2.3 3.3,11.2" fill="#4b98c3"/><polygon points="3.3,2.3 10.2,2.6 14.2,5.9 14.2,11.4 11.6,12.6 3.3,4.3" fill="#4b98c3"/><polyline points="3.3,11.2 6.2,14.5 11.0,14.5 11.6,12.5" fill="none" stroke="#27495c" stroke-width="1"/><polyline points="4.0,2.2 7.2,0.5 8.9,0.6 10.4,2.6" fill="none" stroke="#27495c" stroke-width="1"/></svg>
<span class="t" style="left:515.9px;top:86.0px;font-size:15.6px;line-height:17px;color:#a9a9a9;letter-spacing:0.441px;">api.dart</span>
<svg style="left:572.6px;top:85.5px;" width="16" height="16" viewBox="0 0 16 16"><polyline points="5.2,2.2 11,8 5.2,13.8" fill="none" stroke="#9a9a9a" stroke-width="1.15"/></svg>
<svg style="left:0;top:0" width="700" height="110" viewBox="0 0 700 110"><g fill="none" stroke="#ee9d28" stroke-width="1.15" stroke-linejoin="round"><path d="M591.6 90.3L596.5 85.4 599.3 87.9 594.4 92.8z"/><path d="M596.3 91.4V98.1H603.4M596.3 92.9H603.6"/><path d="M603.5 92.3L606 90 607.9 91.7 605.3 93.9z"/><path d="M603.2 99.2L606 96.3 607.9 97.6 604.7 101.1z"/></g><g fill="none" stroke="#b180d7" stroke-width="1.2" stroke-linejoin="round"><path d="M665.7 85.2L672.6 88.9V97.3L665.7 101.3 658.6 97.3V88.9z"/><path d="M658.6 88.9L665.7 92.8 672.6 88.9M665.7 92.8V101.3"/></g></svg>
<span class="t" style="left:613.6px;top:86.0px;font-size:15.6px;line-height:17px;color:#a9a9a9;letter-spacing:0.327px;">Api</span>
<svg style="left:638.6px;top:85.5px;" width="16" height="16" viewBox="0 0 16 16"><polyline points="5.2,2.2 11,8 5.2,13.8" fill="none" stroke="#9a9a9a" stroke-width="1.15"/></svg>
<span class="t" style="left:679.5px;top:86.0px;font-size:15.6px;line-height:17px;color:#a9a9a9;letter-spacing:0.207px;">headers</span>
<div class="abs" style="left:463px;top:733.0px;width:1249px;height:1px;background:#282828;"></div>
<div class="abs" style="left:463px;top:754px;width:1249px;height:1px;background:#282828;"></div>
<div class="abs" style="left:384px;top:81px;width:1328px;height:834px;overflow:hidden"><div class="abs" style="left:-384px;top:-81px;width:1729px;height:944px">
<div class="ln" style="top:107.0px;color:#6e7681">1</div>
<div class="cl" style="top:107.0px"><span class="k">import</span> <span class="s">&#x27;dart:io&#x27;</span>;</div>
<div class="ln" style="top:128.6px;color:#6e7681">2</div>
<div class="ln" style="top:150.2px;color:#6e7681">3</div>
<div class="cl" style="top:150.2px"><span class="k">import</span> <span class="s">&#x27;package:curl_logger_dio_interceptor/curl_logger_dio_interceptor.dart&#x27;</span>;</div>
<div class="ln" style="top:171.8px;color:#6e7681">4</div>
<div class="cl" style="top:171.8px"><span class="k">import</span> <span class="s">&#x27;package:dio/dio.dart&#x27;</span>;</div>
<div class="ln" style="top:193.4px;color:#6e7681">5</div>
<div class="cl" style="top:193.4px"><span class="k">import</span> <span class="s">&#x27;package:eschool/data/repositories/authRepository.dart&#x27;</span>;</div>
<div class="ln" style="top:215.0px;color:#6e7681">6</div>
<div class="cl" style="top:215.0px"><span class="k">import</span> <span class="s">&#x27;package:eschool/utils/constants.dart&#x27;</span>;</div>
<div class="ln" style="top:236.6px;color:#6e7681">7</div>
<div class="cl" style="top:236.6px"><span class="k">import</span> <span class="s">&#x27;package:eschool/utils/errorMessageKeysAndCodes.dart&#x27;</span>;</div>
<div class="ln" style="top:258.2px;color:#6e7681">8</div>
<div class="cl" style="top:258.2px"><span class="k">import</span> <span class="s">&#x27;package:flutter/foundation.dart&#x27;</span>;</div>
<div class="ln" style="top:279.8px;color:#6e7681">9</div>
<div class="ln" style="top:301.4px;color:#6e7681">10</div>
<div class="cl" style="top:301.4px"><span class="k">class</span> <span class="c">ApiException</span> <span class="k">implements</span> <span class="c">Exception</span> <span class="b1">{</span></div>
<div class="ln" style="top:323.0px;color:#6e7681">11</div>
<div class="cl" style="top:323.0px">  <span class="c">String</span> <span class="v">errorMessage</span>;</div>
<div class="ln" style="top:344.6px;color:#6e7681">12</div>
<div class="ln" style="top:366.2px;color:#6e7681">13</div>
<div class="cl" style="top:366.2px">  <span class="c">ApiException</span><span class="b2">(</span><span class="k">this</span>.<span class="v">errorMessage</span><span class="b2">)</span>;</div>
<div class="ln" style="top:387.8px;color:#6e7681">14</div>
<div class="ln" style="top:409.4px;color:#6e7681">15</div>
<div class="cl" style="top:409.4px">  <span class="v">@override</span></div>
<div class="ln" style="top:431.0px;color:#6e7681">16</div>
<div class="cl" style="top:431.0px">  <span class="c">String</span> <span class="f">toString</span><span class="b2">()</span> <span class="b2">{</span></div>
<div class="ln" style="top:452.6px;color:#6e7681">17</div>
<div class="cl" style="top:452.6px">    <span class="r">return</span> <span class="v">errorMessage</span>;</div>
<div class="ln" style="top:474.2px;color:#6e7681">18</div>
<div class="cl" style="top:474.2px">  <span class="b2">}</span></div>
<div class="ln" style="top:495.8px;color:#6e7681">19</div>
<div class="cl" style="top:495.8px"><span class="b1">}</span></div>
<div class="ln" style="top:517.4px;color:#6e7681">20</div>
<div class="ln" style="top:539.0px;color:#6e7681">21</div>
<div class="cl" style="top:539.0px"><span class="m">// ignore: avoid_classes_with_only_static_members</span></div>
<div class="ln" style="top:560.6px;color:#6e7681">22</div>
<div class="cl" style="top:560.6px"><span class="k">class</span> <span class="c">Api</span> <span class="b1">{</span></div>
<div class="ln" style="top:582.2px;color:#6e7681">23</div>
<div class="cl" style="top:582.2px">  <span class="k">static</span> <span class="c">Map</span>&lt;<span class="c">String</span>, <span class="c">dynamic</span>&gt; <span class="f">headers</span><span class="b2">()</span> <span class="b2">{</span></div>
<div class="ln" style="top:603.8px;color:#6e7681">24</div>
<div class="cl" style="top:603.8px">    <span class="k">final</span> <span class="c">String</span> <span class="v">jwtToken</span> = <span class="c">AuthRepository</span><span class="b3">()</span>.<span class="f">getJwtToken</span><span class="b3">()</span>;</div>
<div class="ln" style="top:625.4px;color:#6e7681">25</div>
<div class="cl" style="top:625.4px">    <span class="k">final</span> <span class="v">schoolCode</span> = <span class="c">AuthRepository</span><span class="b3">()</span>.<span class="v">schoolCode</span>;</div>
<div class="ln" style="top:647.0px;color:#6e7681">26</div>
<div class="ln" style="top:668.6px;color:#6e7681">27</div>
<div class="cl" style="top:668.6px">    <span class="r">if</span> <span class="b3">(</span><span class="v">kDebugMode</span><span class="b3">)</span> <span class="b3">{</span></div>
<div class="ln" style="top:690.2px;color:#6e7681">28</div>
<div class="cl" style="top:690.2px">      <span class="f">print</span><span class="b1">(</span><span class="v">jwtToken</span><span class="b1">)</span>;</div>
<div class="ln" style="top:711.8px;color:#6e7681">29</div>
<div class="cl" style="top:711.8px">    <span class="b3">}</span></div>
<div class="ln" style="top:733.4px;color:#cccccc">30</div>
<div class="ln" style="top:755.0px;color:#6e7681">31</div>
<div class="cl" style="top:755.0px">    <span class="r">return</span> <span class="b3">{</span></div>
<div class="ln" style="top:776.6px;color:#6e7681">32</div>
<div class="cl" style="top:776.6px">      <span class="s">&quot;Authorization&quot;</span>: <span class="s">&quot;Bearer </span><span class="v">$jwtToken</span><span class="s">&quot;</span>,</div>
<div class="ln" style="top:798.2px;color:#6e7681">33</div>
<div class="cl" style="top:798.2px">      <span class="s">&quot;school-code&quot;</span>: <span class="v">schoolCode</span>,</div>
<div class="ln" style="top:819.8px;color:#6e7681">34</div>
<div class="cl" style="top:819.8px">      <span class="s">&quot;Accept&quot;</span>: <span class="s">&quot;application/json&quot;</span>,</div>
<div class="ln" style="top:841.4px;color:#6e7681">35</div>
<div class="cl" style="top:841.4px">    <span class="b3">}</span>;</div>
<div class="ln" style="top:863.0px;color:#6e7681">36</div>
<div class="cl" style="top:863.0px">  <span class="b2">}</span></div>
<div class="ln" style="top:884.6px;color:#6e7681">37</div>
<div class="ln" style="top:906.2px;color:#6e7681">38</div>
<div class="cl" style="top:906.2px">  <span class="m">///[General Apis]</span></div>
</div></div>
<div class="ig" style="left:463px;top:323.0px;height:172.8px;background:#404040"></div>
<div class="ig" style="left:463px;top:582.2px;height:332.8px;background:#404040"></div>
<div class="ig" style="left:480px;top:452.6px;height:21.6px;background:#404040"></div>
<div class="ig" style="left:480px;top:603.8px;height:259.2px;background:#5e5e5e"></div>
<div class="ig" style="left:498px;top:690.2px;height:21.6px;background:#404040"></div>
<div class="ig" style="left:498px;top:776.6px;height:64.8px;background:#404040"></div>
<div class="abs" style="left:810.0px;top:582.0px;width:8.2px;height:22.0px;border:1px solid #888;box-sizing:border-box;background:rgba(0,100,0,0.1)"></div>
<div class="abs" style="left:480.3px;top:863.6px;width:8.2px;height:21.2px;border:1px solid #888;box-sizing:border-box;background:rgba(0,100,0,0.1)"></div>
<div class="abs" style="left:516.1px;top:796px;width:112.6px;height:20.7px;border:1.2px solid #e0341a"></div>
<div class="abs" style="left:1711px;top:107px;width:1px;height:808px;background:#121212;"></div>
<div class="abs" style="left:1711px;top:107px;width:17px;height:1px;background:#121212;"></div>
<div class="abs" style="left:1712px;top:170px;width:16px;height:2px;background:#9a9a9a;"></div>
<div class="abs" style="left:0px;top:916px;width:40px;height:25px;background:#0078d4;"></div>
<svg style="left:0;top:0" width="1728" height="941" viewBox="0 0 1728 941"><path d="M14.3 924.7L18.9 929.3 14.3 933.9M23.9 920.2L20.2 924.7 23.9 929.2" fill="none" stroke="#fff" stroke-width="1.15"/><g fill="none" stroke="#cccccc" stroke-width="1.1"><circle cx="51.6" cy="921.8" r="2.1"/><circle cx="59" cy="925.2" r="2.1"/><circle cx="51.6" cy="933.4" r="2.1"/><path d="M51.6 923.9V931.3M59 927.3C59 930.2 55 930 52 931.6"/></g><g fill="none" stroke="#cccccc" stroke-width="1.2"><path d="M141 925.2A5.5 5.5 0 0 1 151.7 927.6M151.2 929.9A5.5 5.5 0 0 1 140.5 927.4"/><path d="M149.4 926.2L151.9 928.4 154.2 926.2M137.9 928.8L140.3 926.4 142.8 928.8"/></g><g fill="none" stroke="#cccccc" stroke-width="1.15"><circle cx="179.4" cy="927.7" r="6.8"/><path d="M176.7 925L182.1 930.4M182.1 925L176.7 930.4"/></g><g fill="none" stroke="#cccccc" stroke-width="1.15" stroke-linejoin="round"><path d="M213.6 921.2L220.4 933.4H206.8z"/><path d="M213.6 925.4V930M213.6 931V932.2"/></g><g fill="none" stroke="#cccccc" stroke-width="1.05"><path d="M263.2 926.4L259.4 934.6M263.2 926.4L267 934.6M260.8 931.6H265.6"/><circle cx="263.2" cy="925" r="1.3"/><path d="M260.4 922.2A4 4 0 0 0 260.4 928M266 922.2A4 4 0 0 1 266 928M258.4 920.4A6.6 6.6 0 0 0 258.4 929.8M268 920.4A6.6 6.6 0 0 1 268 929.8"/></g><g fill="none" stroke="#cccccc" stroke-width="1.1" stroke-linejoin="round"><path d="M309.6 925V921.8L318.4 928.2 313 931.6"/><ellipse cx="307.4" cy="932.6" rx="2.6" ry="3.2"/><path d="M304.8 931L303.2 929.8M310 931L311.6 929.8M304.6 933H302.8M310.2 933H312M305 935L303.4 936.4M309.8 935L311.4 936.4"/></g><g fill="none" stroke="#cccccc" stroke-width="1.1" stroke-linejoin="round"><path d="M1696.6 932.4H1707.8L1706.4 929.8V925.2A4.3 4.3 0 0 0 1697.8 925.2V929.8z"/><path d="M1700.6 932.8A1.6 1.6 0 0 0 1703.8 932.8"/></g></svg>
<span class="t" style="left:68.2px;top:920.0px;font-size:14.4px;line-height:16px;color:#cccccc;letter-spacing:0.732px;">v.1.5.0*+</span>
<span class="t" style="left:193.1px;top:920.0px;font-size:14.4px;line-height:16px;color:#cccccc;letter-spacing:0.000px;">0</span>
<span class="t" style="left:227.1px;top:920.0px;font-size:14.4px;line-height:16px;color:#cccccc;letter-spacing:0.000px;">0</span>
<span class="t" style="left:276.0px;top:920.0px;font-size:14.4px;line-height:16px;color:#cccccc;letter-spacing:0.000px;">0</span>
<span class="t" style="left:980.6px;top:920.0px;font-size:14.4px;line-height:16px;color:#cccccc;letter-spacing:0.290px;">Ln 30, Col 1</span>
<span class="t" style="left:1082.6px;top:920.0px;font-size:14.4px;line-height:16px;color:#cccccc;letter-spacing:0.200px;">Spaces: 2</span>
<span class="t" style="left:1169.0px;top:920.0px;font-size:14.4px;line-height:16px;color:#cccccc;letter-spacing:0.480px;">UTF-8</span>
<span class="t" style="left:1232.1px;top:920.0px;font-size:14.4px;line-height:16px;color:#cccccc;letter-spacing:-1.797px;">LF</span>
<span class="t" style="left:1266.2px;top:919.0px;font-size:14.4px;line-height:16px;color:#cccccc;letter-spacing:3.575px;">{}</span>
<span class="t" style="left:1288.7px;top:920.0px;font-size:14.4px;line-height:16px;color:#cccccc;letter-spacing:0.338px;">Dart</span>
<span class="t" style="left:1334.6px;top:920.0px;font-size:14.4px;line-height:16px;color:#cccccc;letter-spacing:0.286px;">Supermaven Free Tier</span>
<span class="t" style="left:1502.9px;top:920.0px;font-size:14.4px;line-height:16px;color:#cccccc;letter-spacing:0.586px;">EB2101 (android-arm64)</span>
<div class="abs" style="left:463px;top:733px;width:2px;height:22px;background:#b8b8b6;"></div>
</div></div>
<div id="winb"></div>
</body>
</html>
